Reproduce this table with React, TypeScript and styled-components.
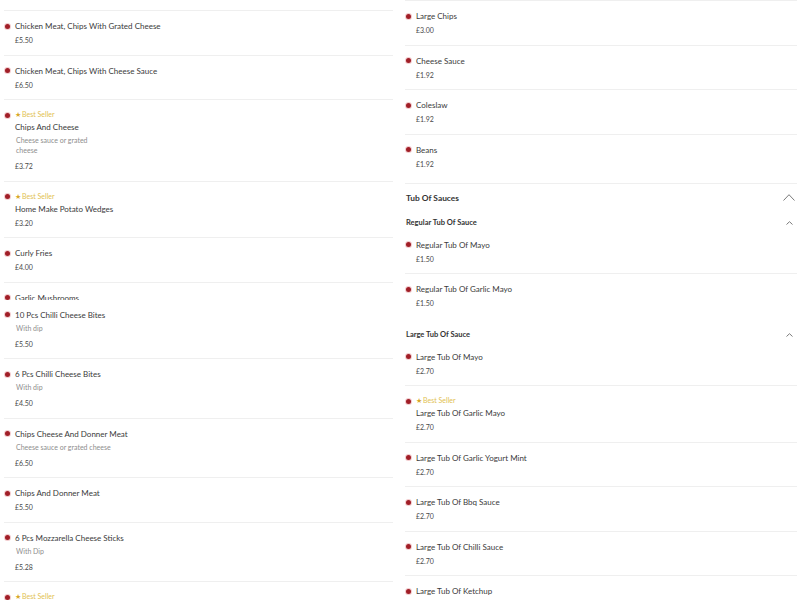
import React from "react";
import styled, { createGlobalStyle } from "styled-components";

type Dish = {
  name: string;
  price: string;
  desc?: string;
  descWidth?: number;
  best?: boolean;
  clip?: number;
  last?: boolean;
};

const leftDishes: Dish[] = [
  { name: "Chicken Meat, Chips With Grated Cheese", price: "£5.50" },
  { name: "Chicken Meat, Chips With Cheese Sauce", price: "£6.50" },
  { name: "Chips And Cheese", price: "£3.72", best: true, desc: "Cheese sauce or grated cheese", descWidth: 80 },
  { name: "Home Make Potato Wedges", price: "£3.20", best: true },
  { name: "Curly Fries", price: "£4.00" },
  { name: "Garlic Mushrooms", price: "£4.00", clip: 17 },
  { name: "10 Pcs Chilli Cheese Bites", price: "£5.50", desc: "With dip" },
  { name: "6 Pcs Chilli Cheese Bites", price: "£4.50", desc: "With dip" },
  { name: "Chips Cheese And Donner Meat", price: "£6.50", desc: "Cheese sauce or grated cheese" },
  { name: "Chips And Donner Meat", price: "£5.50" },
  { name: "6 Pcs Mozzarella Cheese Sticks", price: "£5.28", desc: "With Dip" },
  { name: "Chips And Cheese Sauce", price: "£3.50", best: true },
];

const sides: Dish[] = [
  { name: "Large Chips", price: "£3.00" },
  { name: "Cheese Sauce", price: "£1.92" },
  { name: "Coleslaw", price: "£1.92" },
  { name: "Beans", price: "£1.92", last: true },
];

const regularTubs: Dish[] = [
  { name: "Regular Tub Of Mayo", price: "£1.50" },
  { name: "Regular Tub Of Garlic Mayo", price: "£1.50", last: true },
];

const largeTubs: Dish[] = [
  { name: "Large Tub Of Mayo", price: "£2.70" },
  { name: "Large Tub Of Garlic Mayo", price: "£2.70", best: true },
  { name: "Large Tub Of Garlic Yogurt Mint", price: "£2.70" },
  { name: "Large Tub Of Bbq Sauce", price: "£2.70" },
  { name: "Large Tub Of Chilli Sauce", price: "£2.70" },
  { name: "Large Tub Of Ketchup", price: "£2.70" },
];

const GlobalStyle = createGlobalStyle`
  html, body {
    margin: 0;
    padding: 0;
    background: #ffffff;
    overflow: hidden;
    font-family: Lato, "Liberation Sans", sans-serif;
    color: #3c3c3c;
  }
`;

const Page = styled.div`
  display: grid;
  grid-template-columns: 389px 392px;
  column-gap: 12px;
  padding-left: 4px;
  height: 600px;
  overflow: hidden;
`;

const Column = styled.div`
  display: flex;
  flex-direction: column;
`;

const Edge = styled.div<{ $h: number }>`
  height: ${(p) => p.$h}px;
  border-bottom: 1px solid #efefef;
`;

const Row = styled.div<{ $clip?: number; $last?: boolean }>`
  display: flex;
  gap: 5px;
  padding: 9px 0 9.5px 1px;
  border-bottom: ${(p) => (p.$last || p.$clip ? "none" : "1px solid #efefef")};
  ${(p) => (p.$clip ? `height: ${p.$clip - 9}px; overflow: hidden; padding-bottom: 0;` : "")}
`;

const Dot = styled.span`
  flex: none;
  width: 5px;
  height: 5px;
  margin-top: 3.5px;
  border-radius: 50%;
  background: #a01e27;
  box-shadow: 0 0 0 1px rgba(205, 50, 60, 0.25);
`;

const Body = styled.div`
  display: flex;
  flex-direction: column;
  min-width: 0;
`;

const Badge = styled.div`
  font-size: 7px;
  line-height: 10px;
  color: #e2bf52;
  margin-bottom: 2px;
  span {
    color: #d8a82a;
    font-size: 7px;
    margin-right: 1px;
  }
`;

const Name = styled.div`
  font-size: 8px;
  line-height: 12px;
  color: #3a3a3a;
  white-space: nowrap;
`;

const Desc = styled.div<{ $w?: number }>`
  font-size: 7px;
  line-height: 10px;
  color: #8e8e8e;
  margin: 2px 0 0 1px;
  ${(p) => (p.$w ? `max-width: ${p.$w}px;` : "")}
`;

const Price = styled.div<{ $after?: boolean }>`
  font-size: 7px;
  line-height: 10px;
  color: #4a4a4a;
  margin-top: ${(p) => (p.$after ? 6 : 3)}px;
`;

const Section = styled.div<{ $border?: boolean }>`
  display: flex;
  flex-direction: column;
  ${(p) => (p.$border ? "border-bottom: 1px solid #efefef; padding-bottom: 4.5px;" : "")}
`;

const Header = styled.div`
  display: flex;
  align-items: center;
  justify-content: space-between;
  padding: 8px 2px 2px 1px;
  font-size: 8.4px;
  line-height: 12px;
  font-weight: 700;
  color: #333333;
`;

const SubHeader = styled.div`
  display: flex;
  align-items: center;
  justify-content: space-between;
  padding: 12px 4px 2px 1px;
  font-size: 7.5px;
  line-height: 10px;
  font-weight: 700;
  color: #333333;
`;

const Chevron = ({ w, h }: { w: number; h: number }) => (
  <svg width={w} height={h} viewBox={`0 0 ${w} ${h}`}>
    <polyline
      points={`0.5,${h - 0.5} ${w / 2},0.7 ${w - 0.5},${h - 0.5}`}
      fill="none"
      stroke="#7a7a7a"
      strokeWidth="1"
    />
  </svg>
);

const DishRow = ({ d }: { d: Dish }) => (
  <Row $clip={d.clip} $last={d.last}>
    <Dot />
    <Body>
      {d.best && (
        <Badge>
          <span>★</span>Best Seller
        </Badge>
      )}
      <Name>{d.name}</Name>
      {d.desc && <Desc $w={d.descWidth}>{d.desc}</Desc>}
      <Price $after={!!d.desc}>{d.price}</Price>
    </Body>
  </Row>
);

export default function App() {
  return (
    <>
      <GlobalStyle />
      <Page>
        <Column>
          <Edge $h={10} />
          {leftDishes.map((d) => (
            <DishRow key={d.name} d={d} />
          ))}
        </Column>
        <Column>
          <Edge $h={0} />
          <Section $border>
            {sides.map((d) => (
              <DishRow key={d.name} d={d} />
            ))}
          </Section>
          <Header>
            Tub Of Sauces
            <Chevron w={12} h={7} />
          </Header>
          <SubHeader>
            Regular Tub Of Sauce
            <Chevron w={7} h={4} />
          </SubHeader>
          <Section>
            {regularTubs.map((d) => (
              <DishRow key={d.name} d={d} />
            ))}
          </Section>
          <SubHeader>
            Large Tub Of Sauce
            <Chevron w={7} h={4} />
          </SubHeader>
          <Section>
            {largeTubs.map((d) => (
              <DishRow key={d.name} d={d} />
            ))}
          </Section>
        </Column>
      </Page>
    </>
  );
}
